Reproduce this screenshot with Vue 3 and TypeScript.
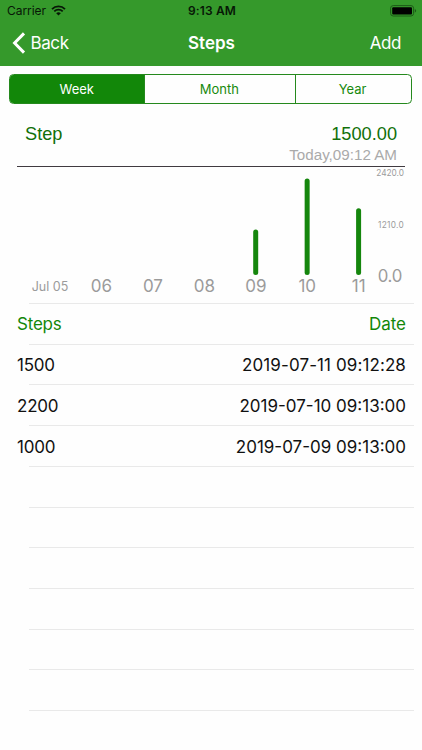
<script setup lang="ts">
interface Entry {
  steps: number
  date: string
  spacing: string
}

interface Day {
  label: string
  value: number
}

const tabs: string[] = ['Week', 'Month', 'Year']

const entries: Entry[] = [
  { steps: 1500, date: '2019-07-11 09:12:28', spacing: 'loose' },
  { steps: 2200, date: '2019-07-10 09:13:00', spacing: 'normal' },
  { steps: 1000, date: '2019-07-09 09:13:00', spacing: 'normal' },
]

const days: Day[] = [
  { label: 'Jul 05', value: 0 },
  { label: '06', value: 0 },
  { label: '07', value: 0 },
  { label: '08', value: 0 },
  { label: '09', value: 1000 },
  { label: '10', value: 2200 },
  { label: '11', value: 1500 },
]

const emptyRows = 7
const firstX = 50
const dayStep = 51.45
const baseline = 105
const dayX = (i: number): number => firstX + i * dayStep
const barTop = (value: number): number => baseline + 2.6 - value * 0.0425
</script>

<template>
  <main class="screen">
    <header class="header">
      <div class="status">
        <div class="carrier">
          <span>Carrier</span>
          <svg class="wifi" viewBox="0 0 15 11" aria-hidden="true">
            <path d="M1 4.1a9.2 9.2 0 0 1 13 0" />
            <path d="M3.3 6.4a6 6 0 0 1 8.4 0" />
            <path class="dot" d="M5.2 8.3a3.3 3.3 0 0 1 4.6 0L7.5 10.6z" />
          </svg>
        </div>
        <span class="clock">9:13 AM</span>
        <svg class="battery" viewBox="0 0 27 12" aria-hidden="true">
          <rect class="shell" x="0.6" y="0.6" width="23" height="10.4" rx="2.6" />
          <rect x="2.2" y="2.2" width="19.8" height="7.2" rx="1" />
          <path class="cap" d="M24.8 4v3.7q1.4-.6 1.4-1.85T24.8 4z" />
        </svg>
      </div>
      <nav class="nav">
        <button class="back" type="button">
          <svg viewBox="0 0 14 22" aria-hidden="true"><path d="M12 1.4 2.6 11l9.4 9.6" /></svg>
          <span>Back</span>
        </button>
        <h1>Steps</h1>
        <button class="add" type="button">Add</button>
      </nav>
    </header>

    <div class="segments">
      <button v-for="(tab, i) in tabs" :key="tab" type="button" :class="{ active: i === 0 }">{{ tab }}</button>
    </div>

    <section class="summary">
      <span class="metric">Step</span>
      <div class="latest">
        <span class="value">1500.00</span>
        <span class="time">Today,09:12 AM</span>
      </div>
    </section>

    <svg class="chart" viewBox="0 0 422 136.5">
      <template v-for="(day, i) in days" :key="day.label">
        <line v-if="day.value" class="bar" :x1="dayX(i)" :x2="dayX(i)" :y1="barTop(day.value)" :y2="baseline + 0.5" transform="translate(-0.1 0)" />
        <text :class="i === 0 ? 'month' : 'day'" :x="dayX(i)" :y="i === 0 ? 123.5 : 125">{{ day.label }}</text>
      </template>
      <text class="scale" x="404" y="9">2420.0</text>
      <text class="scale low" x="404" y="60.5">1210.0</text>
      <text class="zero" x="402" y="115">0.0</text>
    </svg>

    <section class="log">
      <div class="row heading"><span>Steps</span><span>Date</span></div>
      <div v-for="entry in entries" :key="entry.date" class="row">
        <span>{{ entry.steps }}</span><span :class="entry.spacing">{{ entry.date }}</span>
      </div>
      <div v-for="n in emptyRows" :key="n" class="row"></div>
    </section>
  </main>
</template>

<style>
body {
  background: #fefefe;
  overflow: hidden;
}
</style>

<style scoped>
.screen {
  width: 422px;
  height: 750px;
  overflow: hidden;
  background: #fefefe;
  font-family: Inter, "Liberation Sans", sans-serif;
}
button {
  border: 0;
  padding: 0;
  background: none;
  font: inherit;
  color: inherit;
}
.header {
  height: 65.5px;
  background: #35992b;
}
.status {
  display: grid;
  grid-template-columns: 1fr auto 1fr;
  align-items: center;
  height: 21px;
  padding: 0 5px 0 7px;
  font-size: 12px;
  color: #071706;
}
.carrier {
  display: flex;
  align-items: center;
  gap: 5px;
  letter-spacing: -0.05px;
}
.wifi {
  width: 15px;
  height: 11px;
  fill: none;
  stroke: #071706;
  stroke-width: 1.8;
}
.wifi .dot {
  fill: #071706;
  stroke: none;
}
.clock {
  font-weight: 600;
  letter-spacing: 0.15px;
}
.battery {
  width: 27px;
  height: 12px;
  justify-self: end;
}
.battery .shell {
  fill: none;
  stroke: #1c5b17;
  stroke-width: 1;
}
.battery .cap {
  fill: #1c5b17;
}
.nav {
  display: grid;
  grid-template-columns: 1fr auto 1fr;
  align-items: center;
  height: 43px;
  padding: 0 11px 0 12px;
  color: #fff;
  font-size: 17px;
}
.back {
  display: flex;
  align-items: center;
  gap: 4.5px;
  letter-spacing: -0.4px;
}
.back svg {
  width: 14px;
  height: 22px;
  fill: none;
  stroke: #fff;
  stroke-width: 3;
}
.nav h1 {
  margin: 0;
  font-size: 17px;
  font-weight: 600;
}
.add {
  justify-self: end;
  margin-right: 10px;
  letter-spacing: -0.4px;
}
.segments {
  display: grid;
  grid-template-columns: 134.5px 150.5px 1fr;
  height: 30px;
  margin: 8px 10.5px 0 8.5px;
  box-sizing: border-box;
  border: 1px solid #25891d;
  border-radius: 4.5px;
  overflow: hidden;
  color: #188a0e;
  font-size: 13px;
  letter-spacing: -0.1px;
}
.segments button + button {
  border-left: 1px solid #25891d;
  padding-right: 1px;
}
.segments .active {
  background: #128709;
  color: #fff;
}
.summary {
  display: flex;
  justify-content: space-between;
  height: 42px;
  margin: 0 17px;
  padding: 20px 8px 0;
  border-bottom: 1.5px solid #403a40;
  font-family: "Liberation Sans", sans-serif;
  font-size: 18.2px;
  line-height: 21px;
  color: #107009;
}
.latest {
  display: flex;
  flex-direction: column;
  align-items: flex-end;
}
.time {
  font-size: 15.2px;
  line-height: 19px;
  color: #aaa;
}
.chart {
  display: block;
  width: 422px;
  height: 136.5px;
}
.chart text {
  fill: #9b9b9b;
  text-anchor: middle;
}
.bar {
  stroke: #15860d;
  stroke-width: 5;
  stroke-linecap: round;
}
.month {
  font-size: 12.5px;
}
.day {
  font-size: 17px;
}
.chart .scale {
  font-size: 8.3px;
  text-anchor: end;
}
.chart .low {
  letter-spacing: 0.3px;
}
.chart .zero {
  font-size: 16.8px;
  text-anchor: end;
  letter-spacing: -0.3px;
}
.log {
  margin: 0 8px 0 17px;
}
.row {
  display: flex;
  justify-content: space-between;
  align-items: center;
  height: 40.72px;
  box-sizing: border-box;
  padding: 2px 8px 0 0;
  background: linear-gradient(#e9e9e9, #e9e9e9) 12px 0 / 100% 1px no-repeat;
  font-size: 17px;
  color: #111;
}
.row > span:first-child {
  letter-spacing: -0.2px;
}
.loose {
  letter-spacing: 0.1px;
}
.heading {
  color: #128709;
}
</style>
